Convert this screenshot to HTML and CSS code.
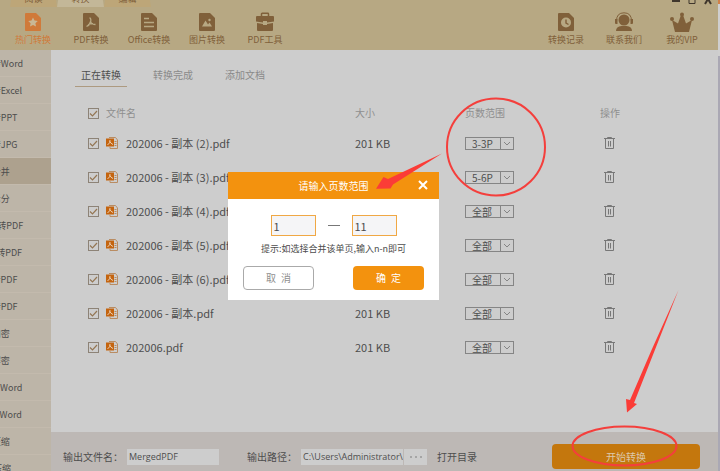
FILE: index.html
```
<!DOCTYPE html>
<html lang="zh-CN">
<head>
    <meta charset="UTF-8">
    <title>PDF转换器</title>
    <link rel="stylesheet" href="styles.css">
</head>
<body>
    <div class="app">
        <header class="header">
            <div class="title-bar">
                <nav class="top-tabs">
                    <a href="#" class="top-tab">阅读</a>
                    <a href="#" class="top-tab active">转换</a>
                    <a href="#" class="top-tab">编辑</a>
                </nav>
                <div class="window-btns">
                    <button aria-label="最小化"><svg width="8" height="5" viewBox="0 0 8 5"><path d="M0 1h8" stroke="#3f362c" stroke-width="2"/></svg></button>
                    <button aria-label="最大化"><svg width="8" height="5" viewBox="0 0 8 5"><path d="M1 0v3.5h6V0" fill="none" stroke="#3f362c"/></svg></button>
                    <button aria-label="关闭"><svg width="8" height="5" viewBox="0 0 8 5"><path d="M4 -1L1 4M4 -1L7 4" stroke="#3f362c" stroke-width="2"/></svg></button>
                </div>
            </div>
            <div class="toolbar">
                <a href="#" class="tool active">
                    <svg width="20" height="20" viewBox="0 0 20 20"><path fill="currentColor" d="M3 1h10l5 5v12q0 1-1 1H3q-1 0-1-1V2q0-1 1-1z"/><path fill="#c9b795" d="M10 5.500l1.500 3 3.300.5-2.400 2.300.6 3.300-3-1.600-3 1.600.6-3.300L5.200 9l3.300-.5z"/></svg>
                    <span>热门转换</span>
                </a>
                <a href="#" class="tool">
                    <svg width="20" height="20" viewBox="0 0 20 20"><path fill="currentColor" d="M3 1h10l5 5v12q0 1-1 1H3q-1 0-1-1V2q0-1 1-1z"/><path fill="none" stroke="#b7a883" stroke-width="1.300" d="M8.500 6q1.500 0 1.300 3-.8 4-4.300 5.500M9.500 10q1.500 2.500 5 2.500M7 12.800q2.500-1.500 5-1.200"/></svg>
                    <span>PDF转换</span>
                </a>
                <a href="#" class="tool">
                    <svg width="20" height="20" viewBox="0 0 20 20"><path fill="currentColor" d="M3 1h10l5 5v12q0 1-1 1H3q-1 0-1-1V2q0-1 1-1z"/><path stroke="#b7a883" stroke-width="1.400" d="M5 6.500h5M5 10.500h10M5 14.500h10"/></svg>
                    <span>Office转换</span>
                </a>
                <a href="#" class="tool">
                    <svg width="20" height="20" viewBox="0 0 20 20"><path fill="currentColor" d="M3 1h10l5 5v12q0 1-1 1H3q-1 0-1-1V2q0-1 1-1z"/><path fill="#b7a883" d="M5 14.500l3.500-6 2.500 4 1.500-2 2.500 4z"/><circle cx="12.500" cy="8" r="1.200" fill="#b7a883"/></svg>
                    <span>图片转换</span>
                </a>
                <a href="#" class="tool">
                    <svg width="20" height="20" viewBox="0 0 20 20"><path fill="none" stroke="currentColor" stroke-width="1.500" d="M6.500 4V2q0-.7.7-.7h5.600q.7 0 .7.700v2"/><path fill="currentColor" d="M2 4h16q1 0 1 1v4.500l-7 1V9H8v1.500l-7-1V5q0-1 1-1zM2 11l6 1v1h4v-1l6-1v7q0 1-1 1H3q-1 0-1-1z"/></svg>
                    <span>PDF工具</span>
                </a>
                <div class="spacer"></div>
                <a href="#" class="tool">
                    <svg width="20" height="20" viewBox="0 0 20 20"><path fill="currentColor" d="M3 1h10l5 5v12q0 1-1 1H3q-1 0-1-1V2q0-1 1-1z"/><circle cx="10" cy="10.500" r="5" fill="#b7a883"/><path fill="none" stroke="currentColor" stroke-width="1.400" d="M10 7.500V11l2.500 1.500"/></svg>
                    <span>转换记录</span>
                </a>
                <a href="#" class="tool">
                    <svg width="20" height="20" viewBox="0 0 20 20"><circle cx="10" cy="8" r="5.500" fill="currentColor"/><path fill="none" stroke="currentColor" d="M2.500 9Q2.500.8 10 .8T17.500 9"/><path fill="currentColor" d="M1 7h2.500v5H2q-1 0-1-1zM16.500 7H19v4q0 1-1 1h-1.500zM2 19q0-4.500 5.500-5h5q5.500.5 5.500 5z"/></svg>
                    <span>联系我们</span>
                </a>
                <a href="#" class="tool">
                    <svg width="24" height="20" viewBox="0 0 24 20"><path fill="currentColor" d="M5 20L2 8l6 3.500L11 3h2l3 8.500L22 8l-3 12z"/><circle cx="12" cy="2.500" r="2" fill="currentColor"/><circle cx="2" cy="7" r="2" fill="currentColor"/><circle cx="22" cy="7" r="2" fill="currentColor"/></svg>
                    <span>我的VIP</span>
                </a>
            </div>
        </header>

        <div class="body">
            <nav class="sidebar">
                <a href="#">PDF转Word</a>
                <a href="#">PDF转Excel</a>
                <a href="#">PDF转PPT</a>
                <a href="#">PDF转JPG</a>
                <a href="#" class="active">PDF合并</a>
                <a href="#">PDF拆分</a>
                <a href="#">Word转PDF</a>
                <a href="#">Excel转PDF</a>
                <a href="#">PPT转PDF</a>
                <a href="#">JPG转PDF</a>
                <a href="#">PDF加密</a>
                <a href="#">PDF解密</a>
                <a href="#">CAJ转Word</a>
                <a href="#">TXT转Word</a>
                <a href="#">PDF压缩</a>
                <a href="#">图片压缩</a>
            </nav>

            <main class="main">
                <div class="content">
                    <nav class="tabs">
                        <a href="#" class="active">正在转换</a>
                        <a href="#">转换完成</a>
                        <a href="#">添加文档</a>
                    </nav>
                    <table class="files">
                        <thead>
                            <tr>
                                <th class="col-name"><label class="file"><input type="checkbox" checked><span>文件名</span></label></th>
                                <th class="col-size">大小</th>
                                <th class="col-range">页数范围</th>
                                <th>操作</th>
                            </tr>
                        </thead>
                        <tbody id="rows"></tbody>
                    </table>
                </div>

                <footer class="footer">
                    <label for="out-name">输出文件名：</label>
                    <input type="text" id="out-name" class="out-name" value="MergedPDF">
                    <label for="out-path" class="path-label">输出路径：</label>
                    <div class="path-box">
                        <input type="text" id="out-path" value="C:\Users\Administrator\">
                        <button aria-label="浏览"><i></i><i></i><i></i></button>
                    </div>
                    <a href="#" class="open-dir">打开目录</a>
                    <button class="start">开始转换</button>
                </footer>
            </main>
        </div>
    </div>

    <div class="dialog" role="dialog" aria-labelledby="dialog-title">
        <div class="dialog-head">
            <span id="dialog-title">请输入页数范围</span>
            <button class="close" aria-label="关闭"><svg width="10" height="10" viewBox="0 0 10 10"><path d="M1 1l8 8M9 1L1 9" stroke="#fff" stroke-width="2"/></svg></button>
        </div>
        <div class="range">
            <input type="text" value="1" aria-label="起始页">
            <span class="dash"></span>
            <input type="text" value="11" aria-label="结束页">
        </div>
        <p class="tip">提示:如选择合并该单页,输入n-n即可</p>
        <div class="dialog-btns">
            <button class="cancel">取&ensp;消</button>
            <button class="ok">确&ensp;定</button>
        </div>
    </div>

    <!-- 红色标注 -->
    <svg class="marks" width="720" height="471" viewBox="0 0 720 471">
        <g fill="none" stroke="#f43f3c" stroke-width="2">
            <ellipse cx="496" cy="147" rx="49" ry="48.500"/>
            <ellipse cx="624.500" cy="446" rx="52" ry="19.500"/>
        </g>
        <g fill="#fb3c37">
            <path d="M442 153.500L393 184.500 390.500 188.500 376 188.700 383.500 177 388 179z"/>
            <path d="M678.500 290L634 403 637 404 627 412.500 626 399 630 400 652 349z"/>
        </g>
    </svg>

    <script>
        const files = [
            ['202006 - 副本 (2).pdf', '3-3P'],
            ['202006 - 副本 (3).pdf', '5-6P'],
            ['202006 - 副本 (4).pdf', '全部'],
            ['202006 - 副本 (5).pdf', '全部'],
            ['202006 - 副本 (6).pdf', '全部'],
            ['202006 - 副本.pdf', '全部'],
            ['202006.pdf', '全部']
        ];

        const pdfIcon = `<svg width="13" height="12" viewBox="0 0 13 12">
            <path d="M3 .5h6.500l2 2.500v8.500H4V10" fill="none" stroke="#b98c62"/>
            <path d="M8.500 4.500h2M8.500 6.500h2M8.500 8.500h2" stroke="#b98c62"/>
            <path d="M0 1.500h8v8H0z" fill="#c4640f"/>
            <path d="M4 3q.5 3-2.500 5M4 4.500q.5 2 3 3" fill="none" stroke="#eed9c2" stroke-width=".9"/>
        </svg>`;

        const trashIcon = `<svg width="11" height="12" viewBox="0 0 11 12">
            <path d="M0 1.500h11M3.500 1V.5h4V1M1.500 2v9.500h8V2M4.500 4v5.500M6.500 4v5.500" fill="none" stroke="#777"/>
        </svg>`;

        document.getElementById('rows').innerHTML = files.map(([name, range]) => `
            <tr>
                <td><label class="file"><input type="checkbox" checked>${pdfIcon}<span>${name}</span></label></td>
                <td>201 KB</td>
                <td><select aria-label="页数范围"><option>${range}</option></select></td>
                <td><button class="delete" aria-label="删除">${trashIcon}</button></td>
            </tr>`).join('');
    </script>
</body>
</html>
```
FILE: styles.css
```
* {
    box-sizing: border-box;
}

body {
    margin: 0;
    font-family: "Noto Sans CJK SC", sans-serif;
    font-size: 10px;
    line-height: 16px;
    color: #4d4d4d;
    background: linear-gradient(#d08048 4px, #cfcfcf 4px, #cfcfcf 56px, #aaa8b4 56px);
    overflow: hidden;
}

a {
    color: inherit;
    text-decoration: none;
}

button,
input,
select {
    font: inherit;
    color: inherit;
    margin: 0;
    padding: 0;
    border: none;
    border-radius: 0;
    background: none;
}

svg {
    display: block;
}

.app {
    display: flex;
    flex-direction: column;
    height: 100vh;
    margin-right: 2px;
    background-color: #cdcdcd;
}

/* 顶部 */
.header {
    height: 50px;
    flex-shrink: 0;
    background-color: #b7a883;
    color: #80603a;
}

.title-bar {
    height: 7px;
    overflow: hidden;
    display: flex;
    align-items: flex-end;
    justify-content: space-between;
    padding: 0 6px 0 10px;
}

.top-tabs {
    display: flex;
}

.top-tab {
    width: 47px;
    height: 18px;
    line-height: 20px;
    font-size: 9px;
    text-align: center;
    background-color: #bda678;
    clip-path: polygon(6% 0, 94% 0, 100% 100%, 0 100%);
}

.top-tab.active {
    background-color: #c3b798;
}

.window-btns {
    display: flex;
    align-self: flex-start;
    gap: 8px;
}

.toolbar {
    display: flex;
    font-size: 9px;
    line-height: 12px;
    padding: 5px 7px 0 4px;
}

.tool {
    width: 58px;
    display: flex;
    flex-direction: column;
    align-items: center;
    gap: 2px;
    white-space: nowrap;
}

.tool.active {
    color: #d07a3a;
}

.spacer {
    flex: 1;
}

.body {
    flex: 1;
    min-height: 0;
    display: flex;
}

/* 左侧菜单 */
.sidebar {
    width: 91px;
    margin-left: -40px;
    flex-shrink: 0;
    overflow: hidden;
    background-color: #bdb5a8;
    font-size: 9px;
}

.sidebar a {
    display: block;
    height: 27px;
    line-height: 27px;
    padding-left: 15px;
    border-bottom: 1px solid #c3baad;
    white-space: nowrap;
}

.sidebar a.active {
    background-color: #ada18e;
}

.main {
    flex: 1;
    min-width: 0;
    display: flex;
    flex-direction: column;
}

.content {
    flex: 1;
    min-height: 0;
    padding: 16px 24px 0;
}

.tabs {
    display: flex;
    gap: 20px;
    color: #8a8a8a;
}

.tabs a {
    width: 52px;
    height: 21px;
    line-height: 18px;
    text-align: center;
    border-bottom: 1px solid transparent;
}

.tabs a.active {
    color: #4d4d4d;
    border-color: #ad9a80;
}

/* 文件列表 */
.files {
    width: 100%;
    margin-top: 13px;
    border-collapse: collapse;
    table-layout: fixed;
}

.files th,
.files td {
    padding: 0;
    text-align: left;
    font-weight: normal;
}

.files th {
    height: 26px;
    color: #8f8f8f;
}

.files td {
    height: 34px;
    font-size: 11px;
}

.col-name {
    width: 280px;
}

.col-size {
    width: 110px;
}

.col-range {
    width: 135px;
}

.file {
    display: flex;
    align-items: center;
    gap: 7px;
    padding-left: 13px;
}

input[type="checkbox"] {
    appearance: none;
    width: 11px;
    height: 11px;
    border: 1px solid #8d8377;
    background: url("data:image/svg+xml,%3Csvg xmlns='http://www.w3.org/2000/svg' viewBox='0 0 9 9'%3E%3Cpath d='M1 4.500l2.500 2.500L8 2' fill='none' stroke='%23947653' stroke-width='1.200'/%3E%3C/svg%3E");
}

.files select {
    appearance: none;
    display: block;
    width: 49px;
    height: 13px;
    line-height: 11px;
    font-size: 10px;
    padding-left: 6px;
    border: 1px solid #858585;
    background: url("data:image/svg+xml,%3Csvg xmlns='http://www.w3.org/2000/svg' width='13' height='11'%3E%3Cpath d='M.5 0v11M4 4l3 3 3-3' fill='none' stroke='%23858585'/%3E%3C/svg%3E") right center no-repeat;
}

.delete {
    display: block;
    margin-left: 4px;
}

/* 底部 */
.footer {
    height: 39px;
    display: flex;
    align-items: center;
    padding: 10px 18px 0 12px;
    background-color: #bdb8b5;
    white-space: nowrap;
}

.footer input {
    font-family: "Open Sans", "Noto Sans CJK SC", sans-serif;
    font-size: 9px;
}

.out-name {
    width: 92px;
    height: 16px;
    margin-left: 4px;
    padding: 0 2px;
    background-color: #cdcdcd;
}

.path-label {
    margin-left: 28px;
}

.path-box {
    display: flex;
    width: 126px;
    height: 16px;
    margin-left: 4px;
    background-color: #cdcdcd;
}

.path-box input {
    flex: 1;
    min-width: 0;
    padding-left: 2px;
}

.path-box button {
    width: 24px;
    display: flex;
    align-items: center;
    justify-content: center;
    gap: 3px;
    border-left: 1px solid #bdb8b5;
}

.path-box i {
    width: 2px;
    height: 2px;
    background-color: #a5a5a5;
}

.open-dir {
    margin-left: 10px;
}

.start {
    width: 148px;
    height: 25px;
    margin-left: auto;
    border-radius: 4px;
    background-color: #c4770d;
    color: #dcc9ab;
}

/* 页数范围弹窗 */
.dialog {
    position: absolute;
    top: 172px;
    left: 228px;
    width: 211px;
    padding-bottom: 10px;
    background-color: #fff;
}

.dialog-head {
    display: flex;
    align-items: center;
    justify-content: center;
    height: 27px;
    background-color: #f3920e;
    color: #fff;
}

.close {
    position: absolute;
    top: 8px;
    right: 11px;
}

.range {
    display: flex;
    align-items: center;
    justify-content: center;
    gap: 12px;
    margin-top: 16px;
}

.range input {
    width: 45px;
    height: 21px;
    padding-left: 2px;
    font-size: 11px;
    border: 1px solid #f0a845;
    background-color: #f5f5f7;
}

.dash {
    width: 12px;
    height: 1px;
    background-color: #777;
}

.tip {
    margin: 5px 0 9px;
    font-size: 9px;
    text-align: center;
}

.dialog-btns {
    display: flex;
    justify-content: space-between;
    padding: 0 15px;
}

.dialog-btns button {
    width: 71px;
    height: 24px;
    border-radius: 4px;
}

.dialog-btns .cancel {
    border: 1px solid #aaa;
    color: #8f8f8f;
}

.dialog-btns .ok {
    background-color: #f3920e;
    color: #fff;
}

.marks {
    position: absolute;
    top: 0;
    left: 0;
    pointer-events: none;
}
```
